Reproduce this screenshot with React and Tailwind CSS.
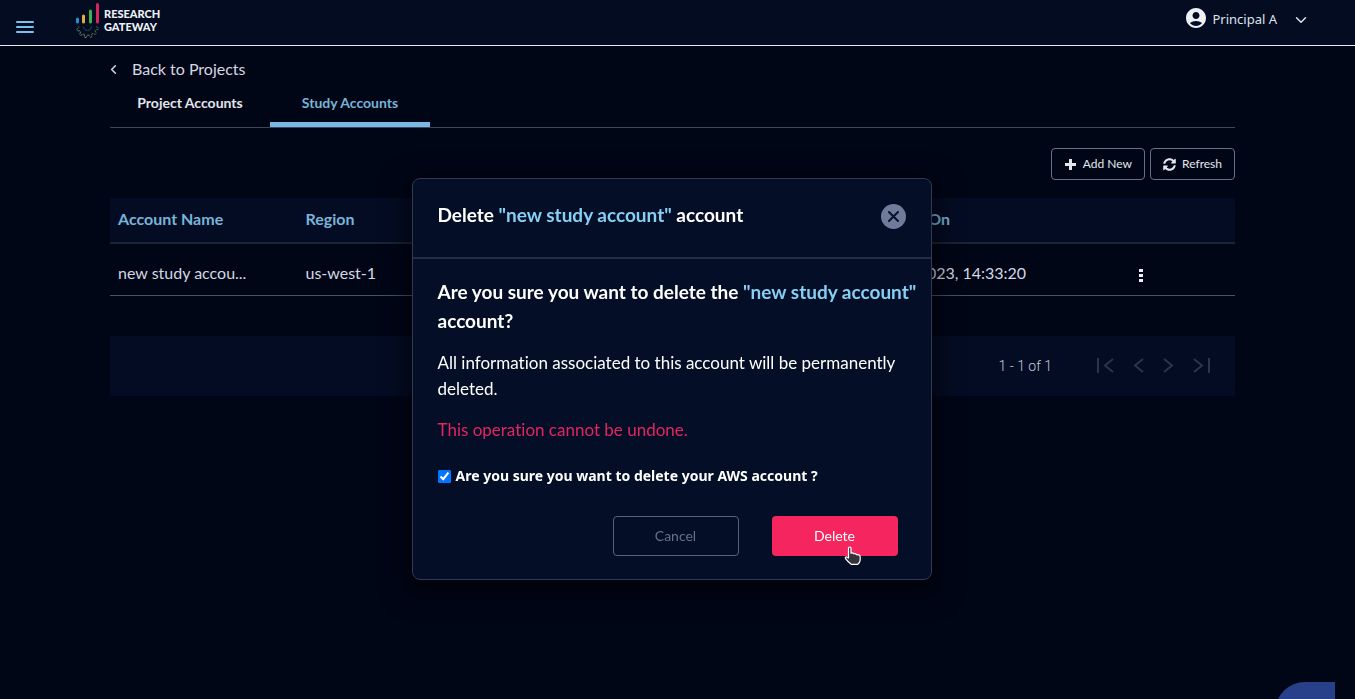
import React from "react";
import { MdAccountCircle } from "react-icons/md";
import { FaSyncAlt } from "react-icons/fa";
import { ChevronDown, ChevronLeft } from "lucide-react";

// Lower half of a gear wheel: the outline steps between two radii.
function gearPath(cx, cy, inner, outer, teeth) {
  const step = Math.PI / (teeth * 4);
  const points = [];
  for (let i = 0; i <= teeth * 4; i += 1) {
    const radius = i % 4 === 1 || i % 4 === 2 ? outer : inner;
    const x = cx + radius * Math.cos(i * step);
    const y = cy + radius * Math.sin(i * step);
    points.push(`${x.toFixed(2)} ${y.toFixed(2)}`);
  }
  return `M${points.join("L")}`;
}

function Logo() {
  return (
    <a href="#home" aria-label="Research Gateway" className="flex items-start gap-1 pt-[2px] text-[#eef1f7]">
      <svg width="24" height="38" viewBox="0 0 24 38" fill="none" aria-hidden="true">
        <defs>
          <linearGradient id="gear" x1="0" x2="1">
            <stop offset="0" stopColor="#3d7a5c" />
            <stop offset=".45" stopColor="#8a8f55" />
            <stop offset="1" stopColor="#2f5a4c" />
          </linearGradient>
        </defs>
        <rect x="0" y="15.5" width="3" height="6" rx="1.5" fill="#1f8fd0" />
        <rect x="6" y="12.5" width="3" height="9" rx="1.5" fill="#e0ae3a" />
        <rect x="13" y="7.5" width="3" height="14" rx="1.5" fill="#3fb04f" />
        <rect x="20" y="1" width="3" height="20.5" rx="1.5" fill="#d6255f" />
        <path d={gearPath(11.5, 24.5, 8.6, 11.2, 6)} stroke="url(#gear)" strokeWidth="1" strokeDasharray="3 .8" />
        <path d="M7.5 24.500c.2 2.600 1.800 4 4 4s3.800-1.400 4-4" stroke="#24485a" strokeWidth="1" />
      </svg>
      <span className="pt-[5px] font-['Lato',sans-serif] text-[11px] leading-[13px] font-black">
        RESEARCH
        <br />
        GATEWAY
      </span>
    </a>
  );
}

function TopBar() {
  return (
    <header className="flex h-[46px] items-start justify-between border-b border-[#e8eaee] bg-[#040c22] pr-[45px] pl-4">
      <div className="flex">
        <button type="button" aria-label="Open menu" className="mr-[42px] flex w-[18px] flex-col gap-[3px] pt-[21px]">
          <span className="h-[2px] w-full rounded bg-[#7cc0ee]" />
          <span className="h-[2px] w-full rounded bg-[#7cc0ee]" />
          <span className="h-[2px] w-full rounded bg-[#7cc0ee]" />
        </button>
        <Logo />
      </div>
      <button
        type="button"
        className="flex h-10 items-center font-['Noto_Sans',sans-serif] text-[13px] text-[#dfe3ea]"
      >
        <MdAccountCircle className="mr-1 mb-1 size-6 text-[#eef0f5]" />
        Principal A
        <ChevronDown className="ml-[15px] size-[18px]" strokeWidth={2} />
      </button>
    </header>
  );
}

const toolButton =
  "flex h-8 items-center gap-[6px] rounded border border-[#667085] px-3 text-xs text-[#e3e6ec]";

function Pager() {
  const icons = [
    ["First page", "M2 1v15M17 2 9 8.500l8 6.500"],
    ["Previous page", "M15 2 7 8.500l8 6.500"],
    ["Next page", "M4 2l8 6.500L4 15"],
    ["Last page", "M2 2l8 6.500L2 15M17 1v15"],
  ];
  return (
    <nav aria-label="Pagination" className="mt-10 flex h-[60px] items-center justify-end bg-[#040c24] pr-6">
      <span className="mr-[43px] font-['Roboto',sans-serif] text-sm font-light text-[#c5cad4]">1 - 1 of 1</span>
      <div className="flex gap-3">
        {icons.map(([label, d]) => (
          <button key={label} type="button" disabled aria-label={label} className="flex w-5 justify-center">
            <svg width="18" height="17" viewBox="0 0 18 17" fill="none" stroke="#2d3447" strokeWidth="2">
              <path d={d} />
            </svg>
          </button>
        ))}
      </div>
    </nav>
  );
}

function AccountsTable() {
  return (
    <table className="mt-[18px] w-full table-fixed border-collapse text-left text-base">
      <thead>
        <tr className="h-[45px] border-b-2 border-[#1c2433] bg-[#040c24] text-[#79b4d8]">
          <th className="px-2 pb-[2px] font-bold">Account Name</th>
          <th className="px-2 pb-[2px] font-bold">Region</th>
          <th />
          <th />
          <th className="px-2 pb-[2px] font-bold">Created On</th>
          <th />
        </tr>
      </thead>
      <tbody>
        <tr className="h-[52px] border-b border-[#4a5263] text-[#d4d8e0]">
          <td className="truncate px-2 pt-2">new study accou...</td>
          <td className="px-2 pt-2">us-west-1</td>
          <td />
          <td />
          <td className="px-2 pt-2 whitespace-nowrap">Jul 26, 2023, 14:33:20</td>
          <td className="pt-3">
            <button type="button" aria-label="Account actions" className="mx-auto flex w-4 flex-col items-center gap-[2px]">
              <span className="h-[3px] w-1 bg-[#eef0f5]" />
              <span className="h-[3px] w-1 bg-[#eef0f5]" />
              <span className="h-[3px] w-1 bg-[#eef0f5]" />
            </button>
          </td>
        </tr>
      </tbody>
    </table>
  );
}

function DeleteDialog() {
  return (
    <div className="fixed inset-0 flex items-start justify-center pt-[178px] pr-3">
      <section
        role="dialog"
        aria-modal="true"
        aria-labelledby="dialog-title"
        className="w-[520px] rounded-lg border border-[#303a50] bg-[#040e26] text-white shadow-[0_8px_24px_8px_rgba(0,0,0,0.5)]"
      >
        <div className="flex h-20 items-center justify-between border-b-2 border-[#222d47] px-[25px] pb-1">
          <h2 id="dialog-title" className="pb-[2px] text-[19px] leading-7 font-bold">
            Delete <span className="text-[#86cff5]">"new study account"</span> account
          </h2>
          <button
            type="button"
            aria-label="Close"
            className="flex size-[25px] items-center justify-center rounded-full bg-[#707a9a]"
          >
            <svg width="11" height="11" viewBox="0 0 11 11" stroke="#08122c" strokeWidth="2" strokeLinecap="round">
              <path d="M1 1l9 9M10 1l-9 9" />
            </svg>
          </button>
        </div>
        <div className="pt-[18px] pr-2 pl-[25px]">
          <p className="text-[19px] leading-[29px] font-bold">
            Are you sure you want to delete the{" "}
            <span className="whitespace-nowrap text-[#86cff5]">"new study account"</span> account?
          </p>
          <p className="mt-[15px] text-[17px] leading-[26px]">
            All information associated to this account will be permanently deleted.
          </p>
          <p className="mt-[15px] text-[17px] leading-[26px] text-[#e3265f]">
            This operation cannot be undone.
          </p>
          <label className="mt-[21px] flex items-center gap-[5px] font-['Noto_Sans',sans-serif] text-sm leading-[24px] font-bold">
            <input type="checkbox" defaultChecked className="size-[13px]" />
            Are you sure you want to delete your AWS account ?
          </label>
        </div>
        <div className="flex justify-end gap-[33px] pt-7 pr-[33px] pb-[23px] text-sm">
          <button type="button" className="h-10 w-[126px] rounded border border-[#56617a] text-[#66718a]">
            Cancel
          </button>
          <button type="button" className="relative h-10 w-[126px] rounded bg-[#f5255f] text-white">
            Delete
            <svg
              className="absolute top-[30px] left-[72px]"
              width="18"
              height="19"
              viewBox="0 0 18 19"
              fill="#34343a"
              stroke="#fff"
              strokeWidth="1.200"
              strokeLinejoin="round"
              aria-hidden="true"
            >
              <path d="M4.500 2.200C4.500.6 7 .6 7 2.200v5c1-.4 2.300-.2 2.800.6 1-.3 2.200 0 2.700.8 1.300-.2 3.500.2 3.700 2.200v3.400c-.3 2-1.200 3.400-2.400 4.100H7.200c-1.700-1.300-4.300-3.700-5.700-5.600-.7-1.500.9-2.400 1.900-1.500l1.100.7z" />
            </svg>
          </button>
        </div>
      </section>
    </div>
  );
}

export default function App() {
  return (
    <div className="relative h-screen overflow-hidden bg-[#010617] font-['Lato','Noto_Sans',sans-serif] [font-variant-ligatures:none]">
      <TopBar />
      <main className="pt-[11px] pr-[120px] pl-[110px]">
        <a href="#projects" className="flex h-6 items-center text-base text-[#d4d8e0]">
          <ChevronLeft className="mr-[11px] -ml-1 size-[15px]" strokeWidth={2.5} />
          Back to Projects
        </a>
        <div role="tablist" className="flex h-[47px] border-b border-[#3f4757] text-sm font-bold">
          <button
            type="button"
            role="tab"
            aria-selected="false"
            className="w-40 border-b-[5px] border-transparent pt-[3px] text-[#e3e6ec]"
          >
            Project Accounts
          </button>
          <button
            type="button"
            role="tab"
            aria-selected="true"
            className="w-40 border-b-[5px] border-[#7ab8e6] pt-[3px] text-[#79b4d8]"
          >
            Study Accounts
          </button>
        </div>
        <div className="mt-5 flex justify-end gap-[5px]">
          <button type="button" className={toolButton}>
            <svg width="13" height="13" viewBox="0 0 13 13" stroke="currentColor" strokeWidth="3" aria-hidden="true">
              <path d="M6.500 1v11M1 6.500h11" />
            </svg>
            Add New
          </button>
          <button type="button" className={toolButton}>
            <FaSyncAlt className="size-[13px]" />
            Refresh
          </button>
        </div>
        <AccountsTable />
        <Pager />
      </main>
      <button
        type="button"
        aria-label="Open chat"
        className="fixed right-5 bottom-[-43px] size-[60px] rounded-full rounded-tr-lg bg-[#28408a]"
      />
      <DeleteDialog />
    </div>
  );
}
